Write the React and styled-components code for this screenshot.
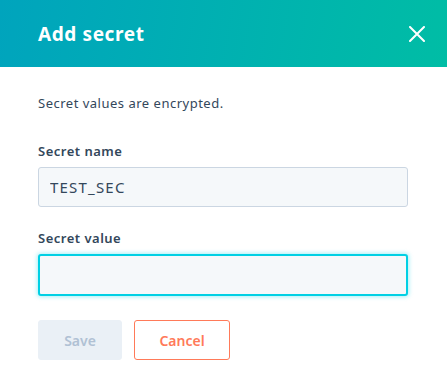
import React from "react";
import styled, { createGlobalStyle } from "styled-components";

const GlobalStyle = createGlobalStyle`
	html, body {
		margin: 0;
		padding: 0;
		background: #ffffff;
	}
	body {
		font-family: "Noto Sans", "Liberation Sans", sans-serif;
		color: #33475b;
	}
`;

export default function App() {
	return (
		<>
			<GlobalStyle />
			<Dialog>
				<Header>
					<Title>Add secret</Title>
					<CloseButton aria-label="Close">
						<svg width="16" height="16" viewBox="0 0 16 16">
							<path d="M1 1 L15 15 M15 1 L1 15" stroke="#ffffff" strokeWidth="2" strokeLinecap="round" />
						</svg>
					</CloseButton>
				</Header>
				<Body>
					<Note>Secret values are encrypted.</Note>
					<Field>
						<Label>Secret name</Label>
						<Input defaultValue="TEST_SEC" />
					</Field>
					<Field>
						<Label>Secret value</Label>
						<Input focused />
					</Field>
					<Actions>
						<Button disabled>Save</Button>
						<Button variant="secondary">Cancel</Button>
					</Actions>
				</Body>
			</Dialog>
		</>
	);
}

const Dialog = styled.div`
	width: 447px;
	height: 378px;
	background: #fff;
	overflow: hidden;
`;

const Header = styled.div`
	height: 67px;
	display: flex;
	align-items: center;
	justify-content: space-between;
	padding: 0 22px 0 38px;
	box-sizing: border-box;
	background: linear-gradient(100deg, #00a4bd 0%, #00bda5 100%);
`;

const Title = styled.h1`
	margin: 0;
	font-size: 19px;
	font-weight: 700;
	color: #fff;
	letter-spacing: 0.6px;
`;

const CloseButton = styled.button`
	border: 0;
	background: none;
	padding: 0;
	display: flex;
	cursor: pointer;
`;

const Body = styled.div`
	padding: 26px 39px 0 38px;
	display: flex;
	flex-direction: column;
`;

const Note = styled.p`
	margin: 0 0 29px;
	font-size: 13px;
	line-height: 20px;
	letter-spacing: 0.5px;
`;

const Field = styled.div`
	display: flex;
	flex-direction: column;
	margin-bottom: 22px;
`;

const Label = styled.label`
	font-size: 13px;
	font-weight: 600;
	line-height: 18px;
	margin-bottom: 7px;
	letter-spacing: 0.5px;
`;

const Input = styled.input`
	height: ${(p) => (p.focused ? "42px" : "40px")};
	box-sizing: border-box;
	background: #f5f8fa;
	border: ${(p) => (p.focused ? "2px solid #00d0e4" : "1px solid #cbd6e2")};
	box-shadow: ${(p) => (p.focused ? "0 0 4px 1px rgba(0, 208, 228, 0.35)" : "none")};
	border-radius: 3px;
	padding: 0 11px;
	font-family: inherit;
	font-size: 15px;
	letter-spacing: 1.2px;
	color: #33475b;
	outline: none;
`;

const Actions = styled.div`
	display: flex;
	gap: 12px;
	margin-top: 2px;
`;

const Button = styled.button`
	height: 40px;
	box-sizing: border-box;
	padding: 0 24px;
	border-radius: 3px;
	font-family: inherit;
	font-size: 14px;
	font-weight: 600;
	border: 1px solid ${(p) => (p.variant === "secondary" ? "#ff7a59" : "#eaf0f6")};
	background: ${(p) => (p.variant === "secondary" ? "#fff" : "#eaf0f6")};
	color: ${(p) => (p.variant === "secondary" ? "#ff7a59" : "#b0c1d4")};
	min-width: ${(p) => (p.variant === "secondary" ? "96px" : "84px")};
`;
